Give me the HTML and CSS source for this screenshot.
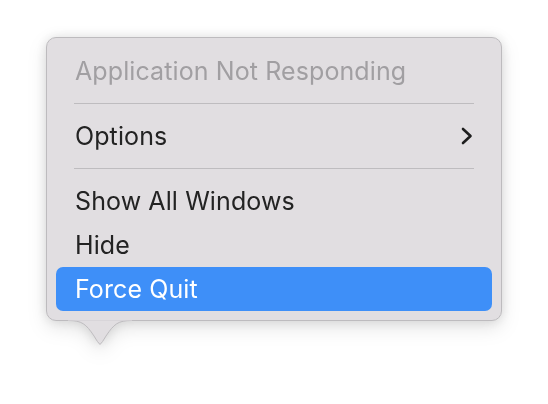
FILE: index.html
```html
<!DOCTYPE html>
<html lang="en">

<head>
    <meta charset="UTF-8">
    <meta name="viewport" content="width=device-width, initial-scale=1.0">
    <title>Dock menu</title>
    <link rel="stylesheet" href="styles.css">
</head>

<body>
    <div class="dock-menu">
        <div class="menu">
            <div class="menu-item menu-title">Application Not Responding</div>
            <div class="menu-sep"></div>
            <div class="menu-item">Options
                <svg class="chevron" width="12" height="18" viewBox="0 0 12 18">
                    <path d="M2 2 L9.5 9 L2 16" fill="none" stroke="#1e1e1e" stroke-width="2.6" stroke-linecap="round" stroke-linejoin="round"/>
                </svg>
            </div>
            <div class="menu-sep"></div>
            <div class="menu-item">Show All Windows</div>
            <div class="menu-item">Hide</div>
            <div class="menu-item active">Force Quit</div>
        </div>
        <!-- 底部小箭头 -->
        <svg class="menu-tail" width="64" height="26" viewBox="0 0 64 26">
            <path d="M0 0.5 C14 0.5 18 4 26 16 Q30 23 32 24.5 Q34 23 38 16 C46 4 50 0.5 64 0.5" fill="#e1dee1" stroke="#bdbbbe" stroke-width="1"/>
            <rect x="0" y="-1" width="64" height="1.5" fill="#e1dee1"/>
        </svg>
    </div>
</body>

</html>
```

FILE: styles.css
```css
* {
    margin: 0px;
    padding: 0px;
    box-sizing: border-box;
}

html,
body {
    height: 100%;
}

body {
    background-color: #fff;
    font-family: Inter, "Noto Sans", sans-serif;
    padding: 37px 0px 40px 46px;
}

.dock-menu {
    width: 456px;
    filter: drop-shadow(0px 0px 6px rgba(0, 0, 0, .11)) drop-shadow(0px 7px 9px rgba(0, 0, 0, .10));
}

.menu {
    background-color: #e1dee1;
    border: 1px solid #bdbbbe;
    border-radius: 10px;
    padding: 11px 9px 9px 9px;
}

.menu-item {
    display: flex;
    align-items: center;
    justify-content: space-between;
    height: 44px;
    padding: 0px 19px 0px 19px;
    font-size: 25px;
    letter-spacing: 0.1px;
    color: #232323;
    border-radius: 7px;
}

.menu-title {
    color: #a19fa2;
}

.menu-item.active {
    background-color: #3e8ff8;
    color: #fff;
}

.menu-sep {
    height: 1px;
    margin: 10px 18px 10px 18px;
    background-color: #bebcbf;
}

.chevron {
    margin-right: 0px;
}

.menu-tail {
    display: block;
    overflow: visible;
    margin: -1px 0px 0px 22px;
}
```
